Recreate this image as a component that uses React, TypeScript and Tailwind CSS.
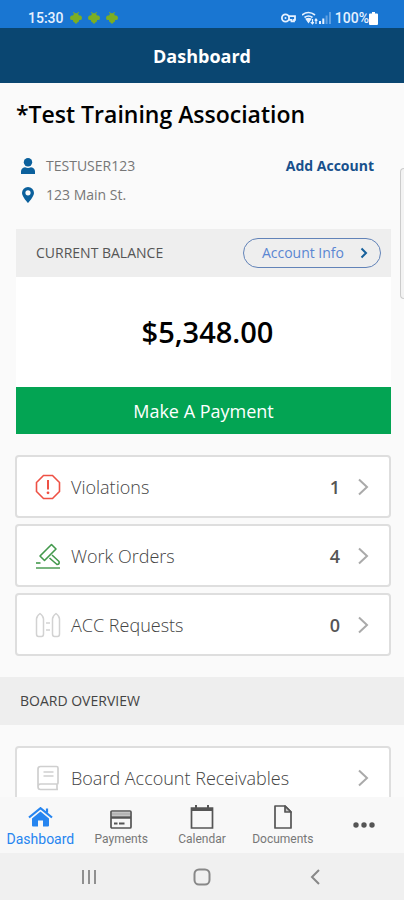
import React from 'react';

interface RowItem {
  label: string;
  count?: number;
  icon: React.ReactNode;
}

interface TabItem {
  label: string;
  active?: boolean;
  icon: React.ReactNode;
}

const summaryRows: RowItem[] = [
  { label: 'Violations', count: 1, icon: <ViolationIcon /> },
  { label: 'Work Orders', count: 4, icon: <GavelIcon /> },
  { label: 'ACC Requests', count: 0, icon: <FenceIcon /> },
];

const boardRows: RowItem[] = [
  { label: 'Board Account Receivables', icon: <LedgerIcon /> },
];

const tabs: TabItem[] = [
  { label: 'Dashboard', active: true, icon: <HomeIcon /> },
  { label: 'Payments', icon: <CardIcon /> },
  { label: 'Calendar', icon: <CalendarIcon /> },
  { label: 'Documents', icon: <DocumentIcon /> },
];

export default function App() {
  return (
    <div className="relative flex h-screen flex-col overflow-hidden bg-[#fafafa] font-['Open_Sans',sans-serif]">
      <StatusBar />

      <header className="flex h-[55px] shrink-0 items-center justify-center bg-[#0a4671]">
        <h1 className="text-lg font-bold text-white">Dashboard</h1>
      </header>

      <main className="min-h-0 flex-1 overflow-hidden">
        <section className="px-4 pt-4">
          <h2 className="text-[23px] leading-[30px] font-semibold text-black">*Test Training Association</h2>

          <div className="mt-[27px] flex items-center justify-between pr-[14px] pl-1">
            <div className="flex items-center gap-[10px]">
              <UserIcon />
              <span className="text-sm text-[#777]">TESTUSER123</span>
            </div>
            <a href="#add-account" className="text-sm font-bold text-[#17508c]">Add Account</a>
          </div>
          <div className="mt-[9px] flex items-center gap-[10px] pl-1">
            <PinIcon />
            <span className="text-sm text-[#777]">123 Main St.</span>
          </div>
        </section>

        {/* Balance */}
        <section className="mt-6 mr-[13px] ml-4 bg-white">
          <div className="flex h-12 items-center justify-between bg-[#eee] pr-[10px] pl-5">
            <h3 className="text-sm text-[#555]">CURRENT BALANCE</h3>
            <button className="flex h-[30px] items-center gap-4 rounded-full border border-[#6283b8] pr-3 pl-[18px] text-sm text-[#5a86d2]">
              Account Info
              <svg width="8" height="12" viewBox="0 0 8 12" fill="none" stroke="#17609b" strokeWidth="2">
                <path d="M1.5 1.5 6 6l-4.500 4.500" />
              </svg>
            </button>
          </div>
          <p className="flex h-[110px] items-center justify-center pl-2 text-[29px] font-semibold text-black">$5,348.00</p>
          <button className="h-[47px] w-full bg-[#03a453] text-lg text-white">Make A Payment</button>
        </section>

        <nav className="mt-[21px] mr-[13px] ml-[15px] space-y-[6px]">
          {summaryRows.map((row) => (
            <Row key={row.label} {...row} />
          ))}
        </nav>

        <h3 className="mt-[21px] flex h-12 items-center bg-[#eee] px-5 text-sm text-[#444]">BOARD OVERVIEW</h3>
        <nav className="mt-[21px] mr-[13px] ml-[15px] space-y-[6px]">
          {boardRows.map((row) => (
            <Row key={row.label} {...row} />
          ))}
        </nav>
      </main>

      <TabBar />
      <SystemBar />

      {/* Edge panel handle */}
      <div className="absolute top-[168px] right-0 h-[131px] w-1 rounded-l-lg border border-r-0 border-[#ccc] bg-[#f3f3f3]" />
    </div>
  );
}

function Row({ label, count, icon }: RowItem) {
  return (
    <a href="#" className="flex h-[63px] items-center rounded-sm border-2 border-[#dedede] bg-white pr-5 pl-[18px]">
      <span className="flex w-[26px] justify-center">{icon}</span>
      <span className="ml-[10px] flex-1 text-lg font-light text-[#444]">{label}</span>
      {count !== undefined && <span className="mr-[17px] text-lg font-semibold text-[#555]">{count}</span>}
      <svg width="12" height="18" viewBox="0 0 12 18" fill="none" stroke="#aaa" strokeWidth="2">
        <path d="M2 1.500 10 9l-8 7.500" />
      </svg>
    </a>
  );
}

function StatusBar() {
  return (
    <div className="flex h-7 shrink-0 items-center justify-between bg-[#1976d2] pt-2 pr-[26px] pl-7 font-[Roboto,sans-serif] text-sm font-medium text-[#e6f1ff]">
      <div className="flex items-center gap-[6px]">
        <span>15:30</span>
        <DroidIcon />
        <DroidIcon />
        <DroidIcon />
      </div>
      <div className="flex items-center">
        {/* VPN key */}
        <svg width="15" height="10" viewBox="0 0 15 10" fill="none" stroke="currentColor" strokeWidth="1.800">
          <circle cx="4.500" cy="5" r="3.600" />
          <circle cx="4.500" cy="5" r="1" fill="currentColor" stroke="none" />
          <path d="M7.500 3.200H14v3.600h-1v1.500h-2.500V6.800h-3" />
        </svg>
        <svg className="ml-[6px]" width="16" height="14" viewBox="0 0 16 14" fill="none" stroke="currentColor" strokeWidth="1.700">
          <path d="M0 4Q6.500 -1 13 4M2.500 6.500Q6.500 3.500 10.500 6.500" />
          <path d="M4.500 8Q6.500 7 8.500 8L6.500 11z" fill="currentColor" />
          <path d="M10.500 8v5M8.800 11.200l1.700 1.700 1.300-1.700M14 13V8M12.800 9.700 14 8l1.300 1.700" strokeWidth="1.200" />
        </svg>
        <svg className="ml-px" width="12" height="12" viewBox="0 0 12 12" fill="currentColor">
          <path d="M0 9h2v3H0zM3.300 6.500h2V12h-2z" />
          <path d="M6.600 3.500h2V12h-2zM10 0h2v12h-2z" opacity=".35" />
        </svg>
        <span className="ml-1">100%</span>
        <svg width="9" height="13" viewBox="0 0 9 13" fill="#fff">
          <path d="M3 0h3v1.500h2a1 1 0 0 1 1 1V12a1 1 0 0 1-1 1H1a1 1 0 0 1-1-1V2.500a1 1 0 0 1 1-1h2z" />
        </svg>
      </div>
    </div>
  );
}

function TabBar() {
  return (
    <nav className="grid h-14 shrink-0 grid-cols-5 bg-[#f8f8f8] font-[Roboto,sans-serif]">
      {tabs.map((tab) => (
        <a
          key={tab.label}
          href="#"
          className={
            tab.active
              ? 'flex flex-col items-center pt-2 text-sm text-[#2685f0]'
              : 'flex flex-col items-center pt-2 text-xs text-[#777]'
          }
        >
          <span className="flex h-6 items-center">{tab.icon}</span>
          <span className="leading-5">{tab.label}</span>
        </a>
      ))}
      <button aria-label="More" className="flex items-center justify-center">
        <svg width="22" height="6" viewBox="0 0 22 6" fill="#555">
          <circle cx="3" cy="3" r="2.700" />
          <circle cx="11" cy="3" r="2.700" />
          <circle cx="19" cy="3" r="2.700" />
        </svg>
      </button>
    </nav>
  );
}

function SystemBar() {
  return (
    <div className="grid h-[47px] shrink-0 grid-cols-3 bg-[#f0f0f0] px-8">
      <button aria-label="Recents" className="flex items-center justify-center">
        <svg width="16" height="16" viewBox="0 0 16 16" stroke="#909090" strokeWidth="2">
          <path d="M2 1v14M8 1v14M14 1v14" />
        </svg>
      </button>
      <button aria-label="Home" className="flex items-center justify-center">
        <svg width="18" height="18" viewBox="0 0 18 18" fill="none" stroke="#888" strokeWidth="2">
          <rect x="1.500" y="1.500" width="15" height="15" rx="4.500" />
        </svg>
      </button>
      <button aria-label="Back" className="flex items-center justify-center">
        <svg width="10" height="16" viewBox="0 0 10 16" fill="none" stroke="#888" strokeWidth="2">
          <path d="M9 1 2 8l7 7" />
        </svg>
      </button>
    </div>
  );
}

function DroidIcon() {
  return (
    <svg width="12" height="12" viewBox="0 0 12 12" fill="#7cae22">
      <path d="M3 3.500Q3.500 1 6 1t3 2.500h1.500Q12 4 12 6t-1.500 2H9v1q0 1-1 1L6 12l-2-2q-1 0-1-1V8H1.500Q0 8 0 6t1.500-2.500z" />
      <path d="m3.500 0 1 2M8.500 0l-1 2" stroke="#7cae22" />
    </svg>
  );
}

function UserIcon() {
  return (
    <svg width="16" height="16" viewBox="0 0 16 16" fill="#0b609c">
      <circle cx="8" cy="4.200" r="4.200" />
      <path d="M1 16v-2.500Q1 10 5 9.200q3 1.600 6 0 4 .8 4 4.300V16z" />
    </svg>
  );
}

function PinIcon() {
  return (
    <svg width="16" height="16" viewBox="0 0 16 16">
      <path fill="#0b609c" fillRule="evenodd" d="M8 0a6 6 0 0 1 6 6C14 9.700 8 16 8 16S2 9.700 2 6a6 6 0 0 1 6-6m0 3.200a2.600 2.600 0 1 0 0 5.200 2.600 2.600 0 0 0 0-5.200" />
    </svg>
  );
}

function ViolationIcon() {
  return (
    <svg width="26" height="26" viewBox="0 0 26 26" fill="none" stroke="#ee5145" strokeWidth="1.600">
      <path d="M8.500 1.500h9l7 7v9l-7 7h-9l-7-7v-9z" />
      <path d="M13 6v9.500" strokeWidth="2" />
      <circle cx="13" cy="18.800" r="1.400" fill="#ee5145" stroke="none" />
    </svg>
  );
}

function GavelIcon() {
  return (
    <svg width="26" height="26" viewBox="0 0 26 26" fill="none" stroke="#43994c" strokeWidth="1.600" strokeLinejoin="round">
      <path d="M16.500 1.500 21 6 9.500 17.500 5 13z" />
      <path d="m17 12 7 6.500q.8 3-2 3L14.500 15" />
      <path d="M1 20h4.500" />
      <path d="M1 25h24" stroke="#79b57f" strokeWidth="2" />
    </svg>
  );
}

function FenceIcon() {
  return (
    <svg width="26" height="26" viewBox="0 0 26 26" fill="none" stroke="#d2d2d2" strokeWidth="1.500" strokeLinejoin="round">
      <path d="M5 1.500Q8.500 4 8.500 7v15q0 2.500-2 2.500h-3q-2 0-2-2.500V7Q1.500 4 5 1.500z" />
      <path d="M21 1.500Q24.500 4 24.500 7v15q0 2.500-2 2.500h-3q-2 0-2-2.500V7Q17.500 4 21 1.500z" />
      <path d="M11 11h4M11 18h4" />
    </svg>
  );
}

function LedgerIcon() {
  return (
    <svg width="24" height="26" viewBox="0 0 24 26" fill="none" stroke="#cfcfcf" strokeWidth="1.700">
      <path d="M4.500 1.500h16q1.500 0 1.500 1.500v15q0 1-1 1H4.500Q2 19 2 21.700t2.500 2.800H22M2 22V4q0-2.500 2.500-2.500M21 19v5.500" />
      <path d="M7.500 7h10M7.500 11h10" />
    </svg>
  );
}

function HomeIcon() {
  return (
    <svg width="25" height="20" viewBox="0 0 25 20" fill="#2685f0">
      <path d="M12.500 4.500 21 11.500v7q0 1-1 1h-5v-6h-5v6H5q-1 0-1-1v-7z" />
      <path d="m1 10.500 11.500-9.300L24 10.500M19 1.500v4" fill="none" stroke="#2685f0" strokeWidth="2.200" />
    </svg>
  );
}

function CardIcon() {
  return (
    <svg className="mt-1" width="22" height="19" viewBox="0 0 22 19" fill="none" stroke="#555" strokeWidth="1.700">
      <rect x="1" y="1" width="20" height="17" rx="1" />
      <path d="M2 4h18" stroke="#b5b5b5" strokeWidth="3.500" />
      <path d="M1 7.500h20" strokeWidth="2.500" />
      <path d="M4 13.500h3.500M9 13.500h5.500" strokeWidth="1.800" />
    </svg>
  );
}

function CalendarIcon() {
  return (
    <svg width="24" height="24" viewBox="0 0 24 24" fill="none" stroke="#555" strokeWidth="1.700">
      <path d="M1.500 3h21v20h-21z" />
      <path d="M1.500 4.500h21" strokeWidth="3" />
      <path d="M6 0v4M18 0v4" strokeWidth="2" />
    </svg>
  );
}

function DocumentIcon() {
  return (
    <svg width="18" height="24" viewBox="0 0 18 24" fill="none" stroke="#555" strokeWidth="1.700" strokeLinejoin="round">
      <path d="M1 1h10l6 6v16H1z" />
      <path d="M11 1v6h6z" fill="#c4c4c4" />
    </svg>
  );
}
